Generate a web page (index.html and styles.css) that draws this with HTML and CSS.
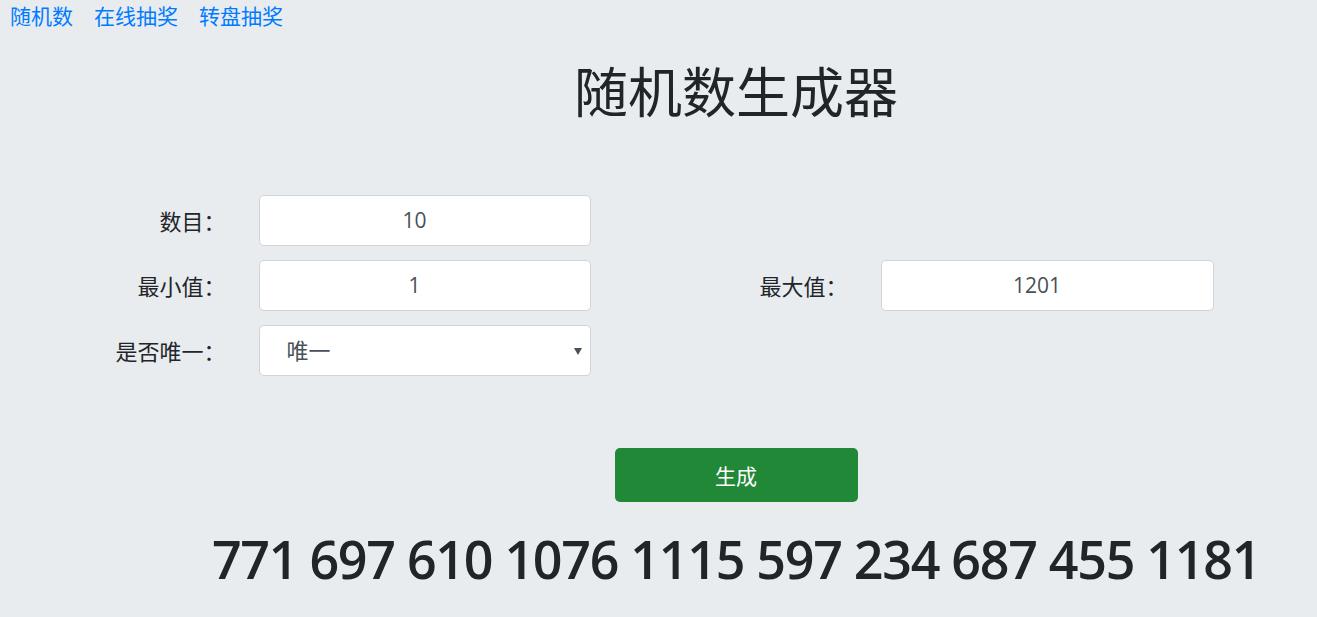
FILE: index.html
```html
<!DOCTYPE html>
<html lang="zh-CN">
<head>
<meta charset="UTF-8">
<meta name="viewport" content="width=device-width, initial-scale=1.0">
<title>随机数生成器</title>
<link rel="stylesheet" href="styles.css">
</head>
<body>
    <nav class="links">
        <a href="#">随机数</a>
        <a href="#">在线抽奖</a>
        <a href="#">转盘抽奖</a>
    </nav>
    <div class="container">
        <div class="center">
            <h1 class="title">随机数生成器</h1>
        </div>
        <form class="form">
            <label class="label" for="count">数目<span class="colon">：</span></label>
            <input class="field" id="count" type="text" value="10">
            <span></span>
            <span></span>

            <label class="label" for="min">最小值<span class="colon">：</span></label>
            <input class="field" id="min" type="text" value="1">
            <label class="label" for="max">最大值<span class="colon">：</span></label>
            <input class="field" id="max" type="text" value="1201">

            <label class="label" for="unique">是否唯一<span class="colon">：</span></label>
            <div class="select-wrap">
                <select class="field select" id="unique">
                    <option>唯一</option>
                    <option>不唯一</option>
                </select>
            </div>
        </form>
        <div class="center">
            <button class="btn" type="button">生成</button>
            <div class="result"><span>771 697 610 1076 1115 597 234 687 455 1181</span></div>
        </div>
    </div>
</body>
</html>
```

FILE: styles.css
```css
body {
    margin: 0;
    background-color: #e9ecef;
    color: #212529;
    font-family: "Open Sans", "Noto Sans CJK SC", sans-serif;
}
.links {
    display: flex;
    gap: 21px;
    padding: 0 10px;
    height: 32px;
    line-height: 32px;
    font-size: 21px;
}
.links a {
    color: #007bff;
    text-decoration: none;
}
.container {
    width: 1110px;
    margin: 0 auto;
}
.center {
    margin-left: 155px;
    text-align: center;
}
.title {
    margin: 28px 0 0;
    font-size: 54px;
    font-weight: 400;
    line-height: 1.2;
}
.form {
    display: grid;
    grid-template-columns: 155px 332px 290px 333px;
    row-gap: 14px;
    margin-top: 70px;
    align-items: center;
}
.label {
    text-align: right;
    padding-right: 33px;
    font-size: 22px;
}
.colon {
    font-family: "Noto Sans CJK TC", sans-serif;
}
.field {
    box-sizing: border-box;
    width: 100%;
    height: 51px;
    padding: 0 32px 0 12px;
    border: 1px solid #ced4da;
    border-radius: 5px;
    background-color: #fff;
    color: #495057;
    font-family: inherit;
    font-size: 21px;
    text-align: center;
    outline: none;
}
.select-wrap {
    position: relative;
}
.select {
    -webkit-appearance: none;
    appearance: none;
    padding: 0 30px 0 27px;
    text-align: left;
    font-size: 22px;
}
.select-wrap::after {
    content: "";
    position: absolute;
    right: 9px;
    top: 23px;
    border-left: 4px solid transparent;
    border-right: 4px solid transparent;
    border-top: 7px solid #495057;
}
.btn {
    width: 243px;
    height: 54px;
    margin-top: 72px;
    border: none;
    border-radius: 5px;
    background-color: #218838;
    color: #fff;
    font-family: inherit;
    font-size: 21px;
}
.result {
    display: flex;
    justify-content: center;
    margin-top: 26px;
    font-size: 52px;
    font-weight: 600;
    line-height: 62px;
    letter-spacing: -1.3px;
    white-space: nowrap;
}
```
